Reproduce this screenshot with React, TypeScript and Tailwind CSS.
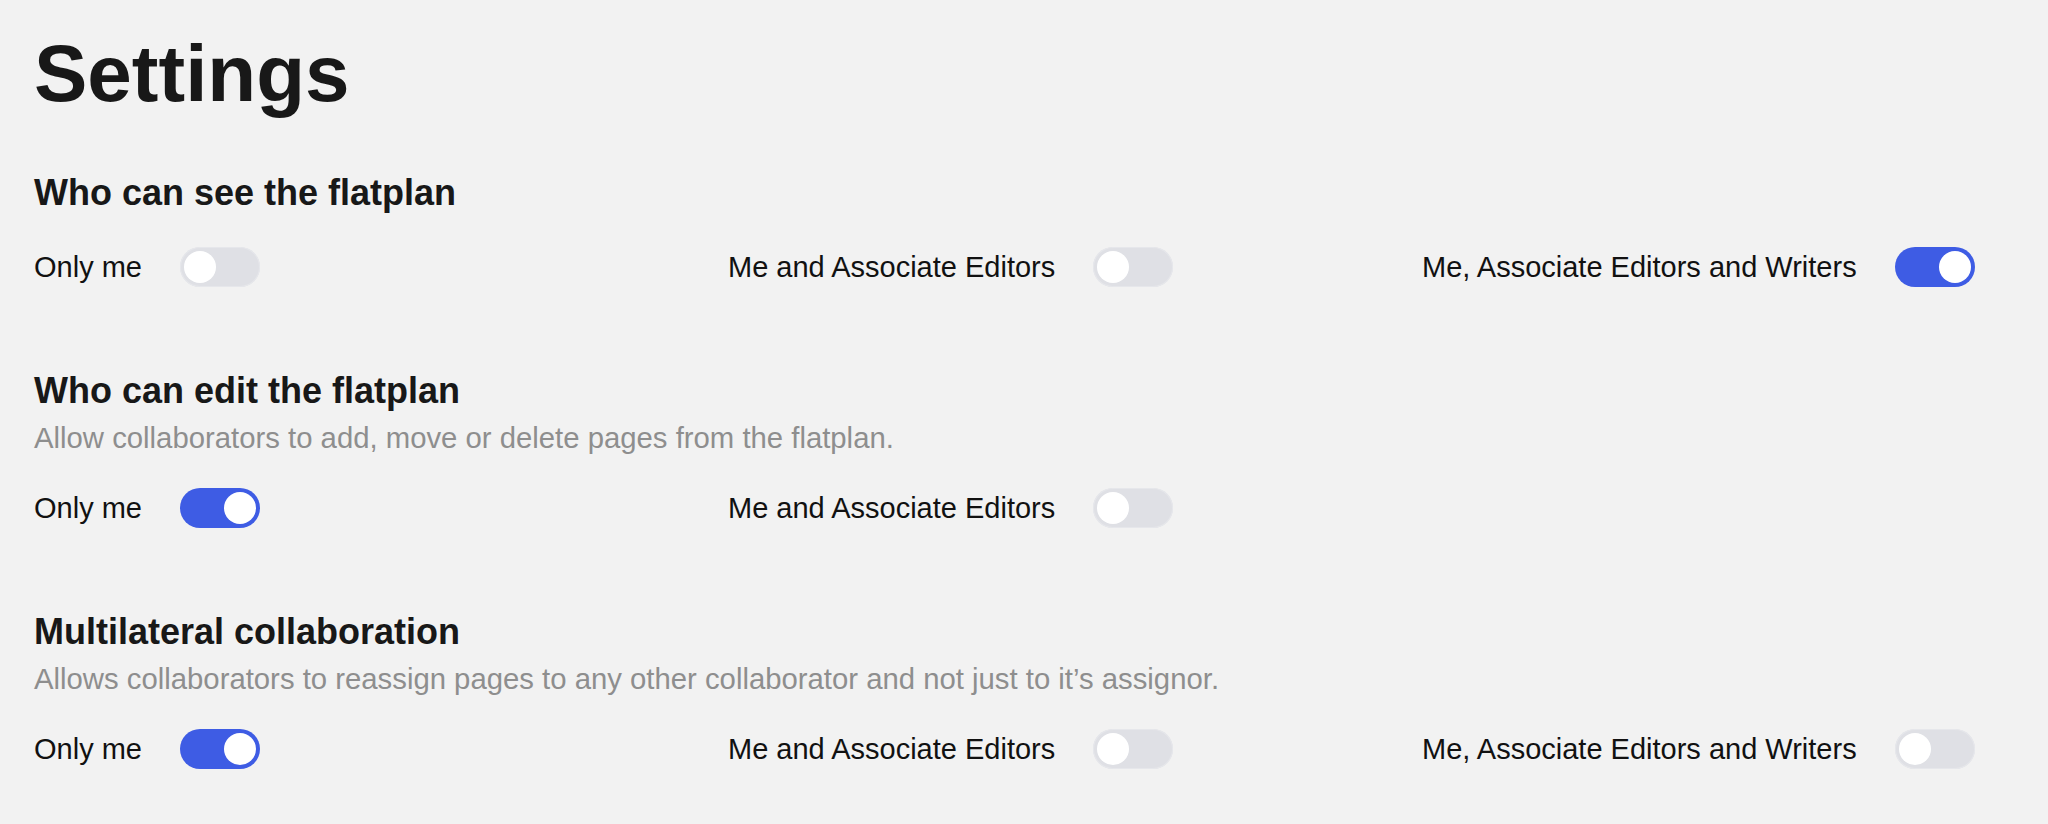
import { useState } from "react";

type Option = { label: string; on: boolean };

type Section = {
  title: string;
  description?: string;
  options: Option[];
};

const initialSections: Section[] = [
  {
    title: "Who can see the flatplan",
    options: [
      { label: "Only me", on: false },
      { label: "Me and Associate Editors", on: false },
      { label: "Me, Associate Editors and Writers", on: true },
    ],
  },
  {
    title: "Who can edit the flatplan",
    description: "Allow collaborators to add, move or delete pages from the flatplan.",
    options: [
      { label: "Only me", on: true },
      { label: "Me and Associate Editors", on: false },
    ],
  },
  {
    title: "Multilateral collaboration",
    description:
      "Allows collaborators to reassign pages to any other collaborator and not just to it\u2019s assignor.",
    options: [
      { label: "Only me", on: true },
      { label: "Me and Associate Editors", on: false },
      { label: "Me, Associate Editors and Writers", on: false },
    ],
  },
];

const Toggle = ({ on, onClick }: { on: boolean; onClick: () => void }) => (
  <button
    onClick={onClick}
    className={`relative w-20 h-10 shrink-0 rounded-full transition-colors ${
      on ? "bg-[#3e5ce4]" : "bg-[#dfe0e5] ring-1 ring-inset ring-[#e6e7eb]"
    }`}
  >
    <span
      className={`absolute top-1 w-8 h-8 rounded-full bg-white transition-all ${
        on ? "left-[44px]" : "left-1"
      }`}
    />
  </button>
);

export default function App() {
  const [sections, setSections] = useState(initialSections);

  const toggle = (si: number, oi: number) => {
    setSections((prev) =>
      prev.map((s, i) =>
        i !== si
          ? s
          : { ...s, options: s.options.map((o, j) => (j === oi ? { ...o, on: !o.on } : o)) }
      )
    );
  };

  return (
    <div className="min-h-screen bg-[#f2f2f2] px-[34px] pt-[34px] font-['Liberation_Sans',Arial,sans-serif] text-[#181818]">
      <h1 className="text-[80px] leading-none font-bold">Settings</h1>

      <div className="mt-[57px] flex flex-col gap-[82px]">
        {sections.map((section, si) => (
          <section key={section.title}>
            <h2 className="text-[36px] leading-[44px] font-bold">{section.title}</h2>
            {section.description && (
              <p className="mt-[7px] text-[29.3px] leading-[36px] text-[#8e8e8e]">
                {section.description}
              </p>
            )}
            <div className="mt-8 grid grid-cols-[694px_694px_1fr]">
              {section.options.map((opt, oi) => (
                <div key={opt.label} className="flex items-center gap-[38px]">
                  <span className="text-[29px] leading-10 text-[#111111]">{opt.label}</span>
                  <Toggle on={opt.on} onClick={() => toggle(si, oi)} />
                </div>
              ))}
            </div>
          </section>
        ))}
      </div>
    </div>
  );
}
